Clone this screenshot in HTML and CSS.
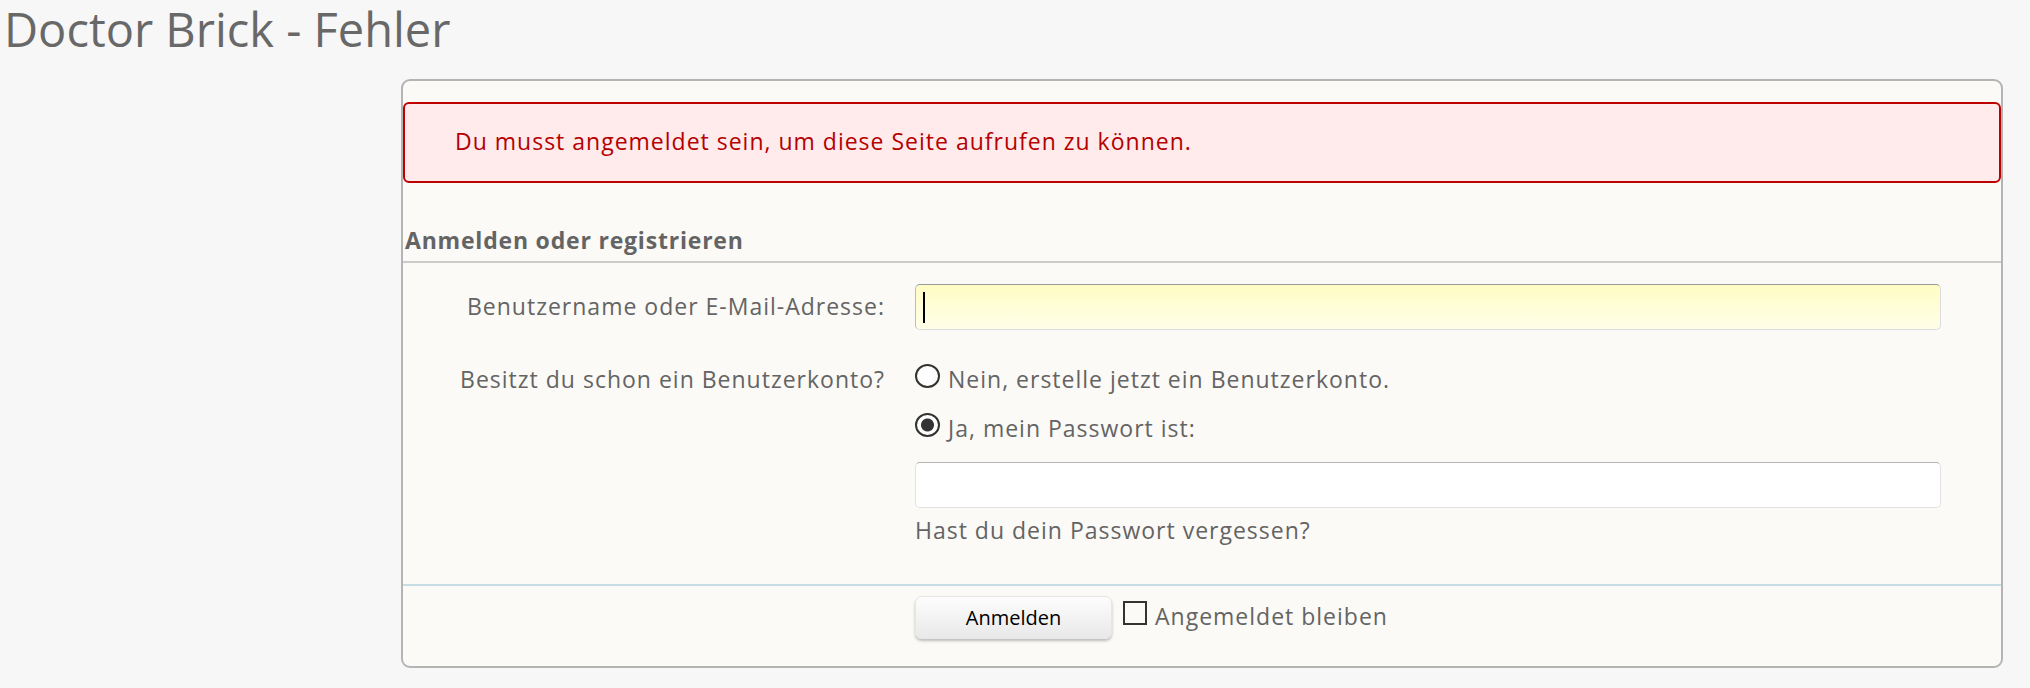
FILE: index.html
```html
<!DOCTYPE html>
<html lang="de">
<head>
    <meta charset="UTF-8">
    <meta name="viewport" content="width=device-width, initial-scale=1.0">
    <title>Doctor Brick - Fehler</title>
    <link rel="stylesheet" href="styles.css">
</head>
<body>
    <h1 class="page-title">Doctor Brick - Fehler</h1>

    <div class="panel">
        <div class="error-box">Du musst angemeldet sein, um diese Seite aufrufen zu können.</div>

        <h2 class="section-head">Anmelden oder registrieren</h2>

        <form class="login-form" action="#">
            <dl class="ctrl-unit">
                <dt><label for="ctrl_login">Benutzername oder E-Mail-Adresse:</label></dt>
                <dd>
                    <div class="ctrl-wrap">
                        <input type="text" id="ctrl_login" class="text-ctrl login-ctrl" autofocus>
                        <span class="caret"></span>
                    </div>
                </dd>
            </dl>

            <dl class="ctrl-unit">
                <dt>Besitzt du schon ein Benutzerkonto?</dt>
                <dd>
                    <ul class="choice-list">
                        <li><label><input type="radio" name="register" value="1">Nein, erstelle jetzt ein Benutzerkonto.</label></li>
                        <li><label><input type="radio" name="register" value="0" checked>Ja, mein Passwort ist:</label></li>
                    </ul>
                    <input type="password" class="text-ctrl">
                    <div class="lost-password"><a href="#">Hast du dein Passwort vergessen?</a></div>
                </dd>
            </dl>

            <dl class="ctrl-unit submit-unit">
                <dt></dt>
                <dd>
                    <button type="button" class="button">Anmelden</button>
                    <label class="remember"><input type="checkbox">Angemeldet bleiben</label>
                </dd>
            </dl>
        </form>
    </div>
</body>
</html>
```

FILE: styles.css
```css
body {
    margin: 0;
    background-color: #f7f7f7;
    font-family: "Open Sans", "DejaVu Sans", sans-serif;
    color: #646464;
}

.page-title {
    margin: 0;
    padding: 2px 0 0 4px;
    font-size: 47px;
    font-weight: normal;
    line-height: 54px;
    color: #686868;
}

.panel {
    margin: 23px 27px 0 401px;
    padding: 21px 0 27px;
    background-color: #fbfaf7;
    border: 2px solid #b4b4b4;
    border-radius: 9px;
}

.error-box {
    padding: 21px 40px 24px 50px;
    background-color: #ffebeb;
    border: 2px solid #be0000;
    border-radius: 6px;
    color: #b40000;
    font-size: 23px;
    line-height: 32px;
    letter-spacing: 1px;
}

.section-head {
    margin: 42px 0 0;
    padding: 0 0 6px 2px;
    font-size: 23px;
    line-height: 30px;
    letter-spacing: 0.8px;
    color: #646464;
    border-bottom: 2px solid #cbcbcb;
}

.login-form {
    padding-top: 21px;
}

.ctrl-unit {
    display: grid;
    grid-template-columns: 496px 1fr;
    column-gap: 16px;
    margin: 27px 0 0;
    font-size: 23px;
    line-height: 32px;
    letter-spacing: 1px;
}

.ctrl-unit:first-child {
    margin-top: 0;
}

.ctrl-unit dt {
    padding: 6px 14px 0 0;
    text-align: right;
}

.ctrl-unit dd {
    margin: 0;
    padding-right: 60px;
}

.ctrl-wrap {
    position: relative;
}

.caret {
    position: absolute;
    top: 8px;
    left: 8px;
    width: 2px;
    height: 31px;
    background: #000;
}

.text-ctrl {
    display: block;
    box-sizing: border-box;
    width: 100%;
    height: 46px;
    padding: 0 8px;
    font: inherit;
    color: #000;
    caret-color: transparent;
    background: #fff;
    border: 1px solid #e2e2e2;
    border-top-color: #b4b4b4;
    border-radius: 5px;
    outline: none;
}

.login-ctrl {
    background: linear-gradient(#fffcc4, #ffffe9);
    border-color: #dcdcdc;
    border-top-color: #999;
    border-left-color: #bbb;
}

.choice-list {
    list-style: none;
    margin: 6px 0 0;
    padding: 0;
}

.choice-list li {
    margin-bottom: 17px;
}

.choice-list label,
.remember {
    display: flex;
    align-items: flex-start;
}

input[type="radio"],
input[type="checkbox"] {
    appearance: none;
    flex: none;
    width: 24px;
    height: 24px;
    margin: 1px 8px 0 0;
    background: #fff;
    border: 2px solid #333;
}

input[type="radio"] {
    width: 25px;
    border-radius: 50%;
}

input[type="radio"]:checked {
    background: radial-gradient(circle, #333 0 6px, #fff 7px);
}

input[type="checkbox"] {
    border-radius: 0;
    background: transparent;
}

.choice-list + .text-ctrl {
    margin-top: 18px;
}

.lost-password {
    margin-top: 6px;
}

.lost-password a {
    color: #646464;
    text-decoration: none;
}

.submit-unit {
    margin-top: 38px;
    padding-top: 10px;
    border-top: 2px solid #c6dde6;
}

.submit-unit dd {
    display: flex;
    align-items: flex-start;
}

.button {
    width: 197px;
    height: 43px;
    margin-right: 11px;
    padding: 0;
    font-family: "Open Sans", sans-serif;
    font-size: 20px;
    line-height: 41px;
    letter-spacing: 0;
    color: #000;
    background: linear-gradient(#fdfdfd, #e9e9e9);
    border: 1px solid #e6e6e6;
    border-radius: 7px;
    box-shadow: 0 2px 3px rgba(0, 0, 0, 0.25);
    cursor: pointer;
}

.remember {
    margin-top: 4px;
}
```
